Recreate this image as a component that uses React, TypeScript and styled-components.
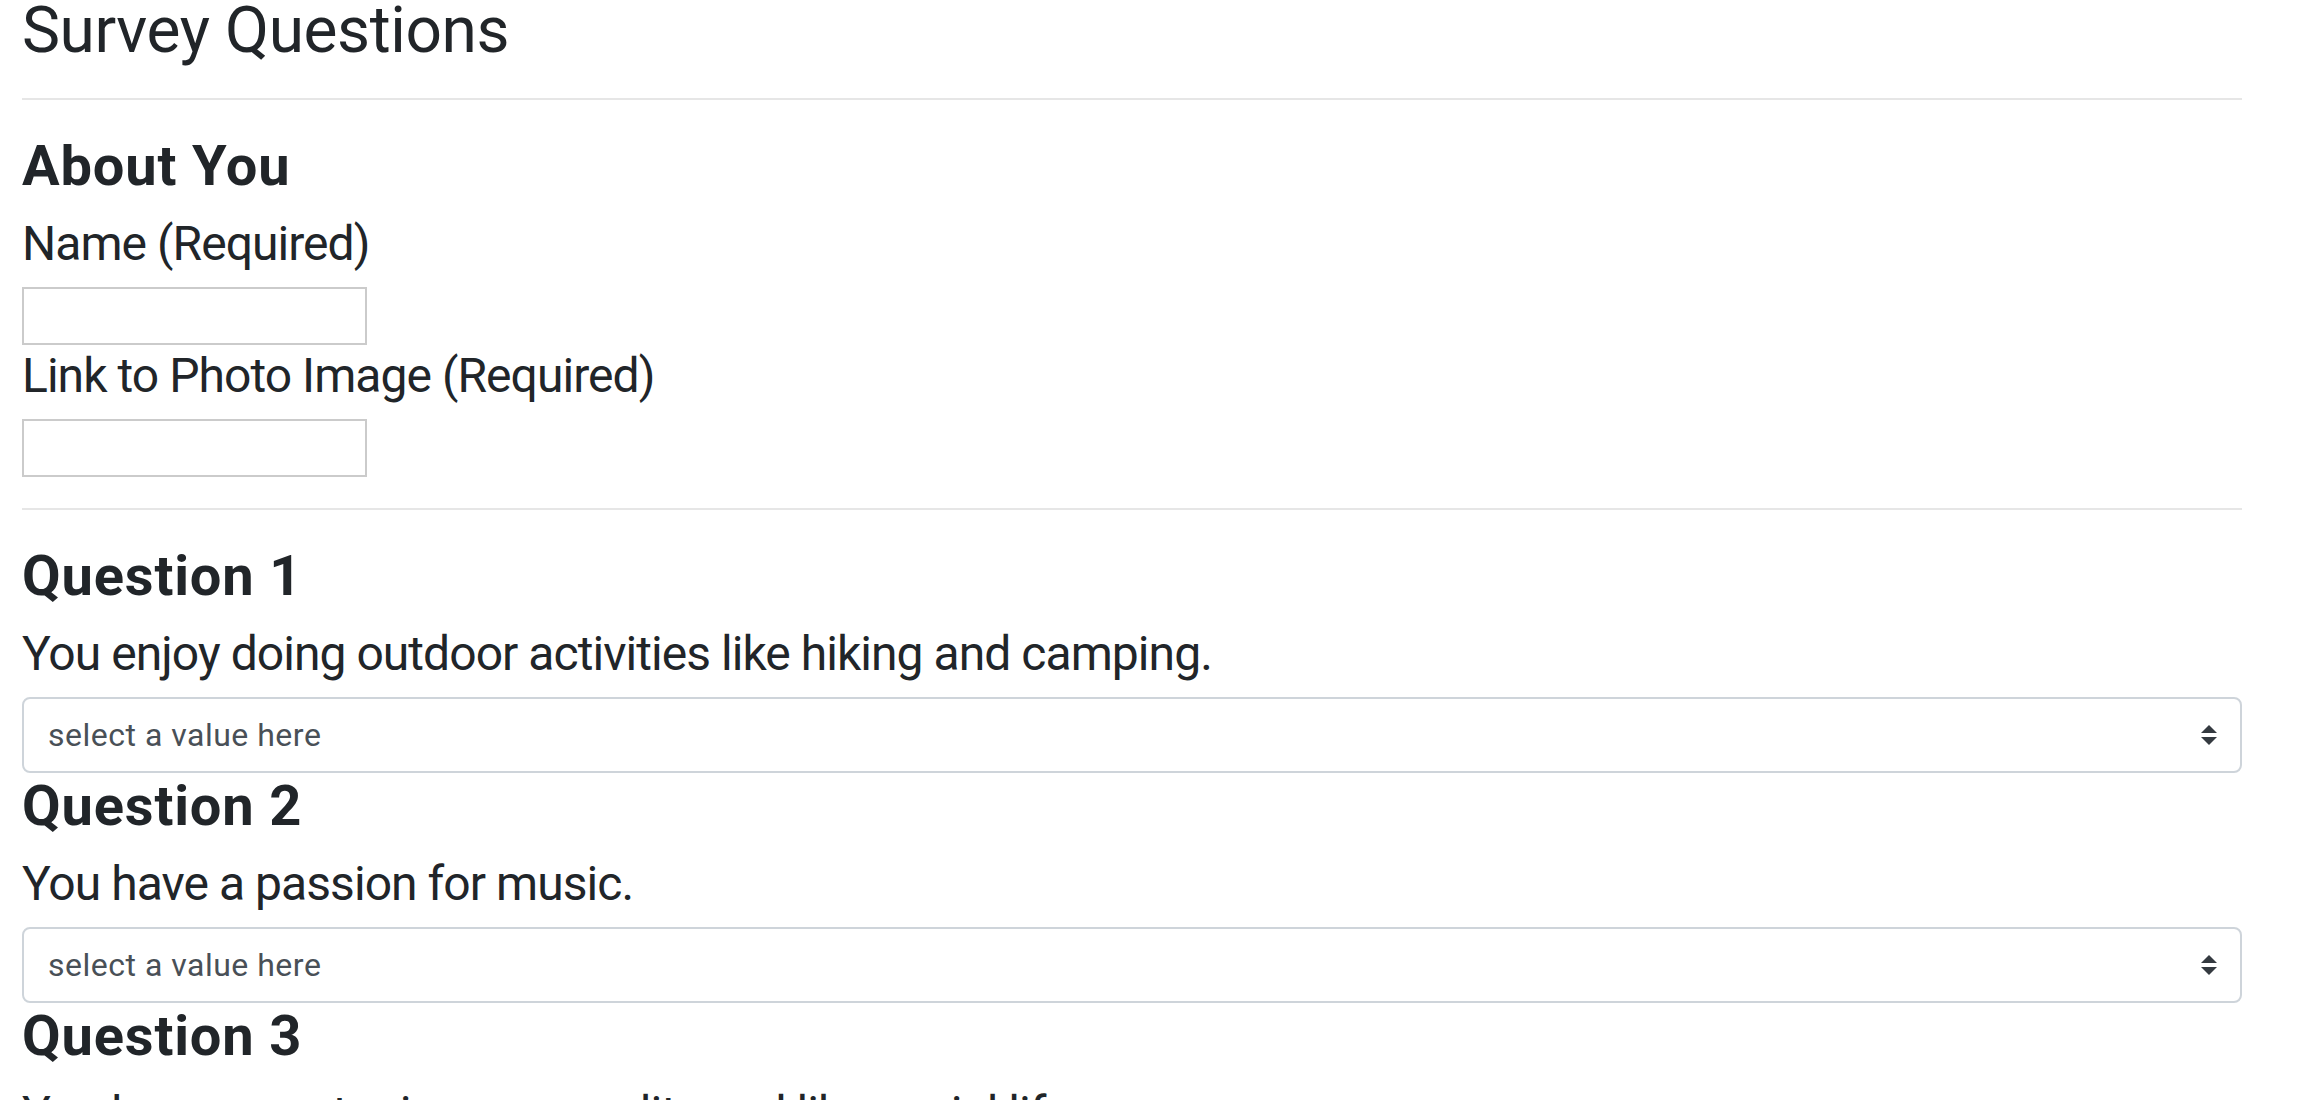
import React from "react";
import styled, { createGlobalStyle } from "styled-components";

const GlobalStyle = createGlobalStyle`
  html, body {
    margin: 0;
    padding: 0;
    background: #ffffff;
  }
  body {
    font-family: Roboto, "Liberation Sans", Arial, sans-serif;
    color: #212529;
  }
  * { box-sizing: border-box; }
`;

const Page = styled.main`
  padding: 0 60px 0 22px;
`;

const Title = styled.h2`
  margin: 0;
  font-size: 64px;
  line-height: 62px;
  font-weight: 400;
  letter-spacing: -0.4px;
  color: #212529;
`;

const Divider = styled.hr<{ $top: number }>`
  border: 0;
  border-top: 2px solid #e6e6e6;
  margin: ${(p) => p.$top}px 0 33px;
  height: 0;
`;

const SectionHeading = styled.h3`
  margin: 0 0 15px;
  font-size: 56px;
  line-height: 67px;
  font-weight: 700;
  letter-spacing: 0.85px;
  color: #212529;
`;

const FieldLabel = styled.label`
  display: block;
  margin: 0 0 14px;
  font-size: 48px;
  line-height: 58px;
  font-weight: 400;
  letter-spacing: -0.95px;
  color: #212529;
`;

const TextInput = styled.input`
  display: block;
  width: 345px;
  height: 58px;
  margin: 0 0 2px;
  border: 2px solid #cbcbcb;
  border-radius: 0;
  background: #fff;
  font-family: Roboto, "Liberation Sans", Arial, sans-serif;
  font-size: 28px;
  padding: 0 8px;
  outline: none;
`;

const QuestionText = styled.p`
  margin: 0 0 14px;
  font-size: 48px;
  line-height: 58px;
  font-weight: 400;
  letter-spacing: -0.95px;
  color: #212529;
`;

const SelectWrap = styled.div`
  position: relative;
  width: 100%;
`;

const Select = styled.select`
  display: block;
  width: 100%;
  height: 76px;
  padding: 12px 64px 12px 24px;
  border: 2px solid #ced4da;
  border-radius: 8px;
  background: #fff;
  color: #495057;
  font-family: Roboto, "Liberation Sans", Arial, sans-serif;
  font-size: 32px;
  line-height: 48px;
  letter-spacing: 0.5px;
  appearance: none;
  -webkit-appearance: none;
  outline: none;
`;

const Arrow = styled.svg`
  position: absolute;
  right: 25px;
  top: 50%;
  width: 16px;
  height: 20px;
  transform: translateY(-50%);
  pointer-events: none;
`;

const questions = [
  "You enjoy doing outdoor activities like hiking and camping.",
  "You have a passion for music.",
  "You have an outgoing personality and like social life.",
];

function ChoiceSelect() {
  return (
    <SelectWrap>
      <Select defaultValue="">
        <option value="">select a value here</option>
        <option value="1">1 (Strongly Disagree)</option>
        <option value="2">2</option>
        <option value="3">3</option>
        <option value="4">4</option>
        <option value="5">5 (Strongly Agree)</option>
      </Select>
      <Arrow viewBox="0 0 4 5" aria-hidden="true">
        <path fill="#343a40" d="M2 0L0 2h4zm0 5L0 3h4z" />
      </Arrow>
    </SelectWrap>
  );
}

export default function App() {
  return (
    <>
      <GlobalStyle />
      <Page>
        <Title>Survey Questions</Title>
        <Divider $top={36} />
        <section>
          <SectionHeading>About You</SectionHeading>
          <FieldLabel htmlFor="name">Name (Required)</FieldLabel>
          <TextInput id="name" type="text" />
          <FieldLabel htmlFor="photo">Link to Photo Image (Required)</FieldLabel>
          <TextInput id="photo" type="text" />
        </section>
        <Divider $top={31} />
        {questions.map((q, i) => (
          <section key={i}>
            <SectionHeading>Question {i + 1}</SectionHeading>
            <QuestionText>{q}</QuestionText>
            <ChoiceSelect />
          </section>
        ))}
      </Page>
    </>
  );
}
